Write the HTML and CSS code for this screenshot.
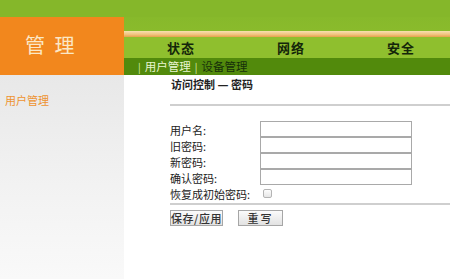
FILE: index.html
```html
<!DOCTYPE html>
<html lang="zh-CN">
<head>
  <meta charset="UTF-8" />
  <title>管理</title>
  <link rel="stylesheet" href="styles.css">
</head>
<body>
  <!-- Header -->
  <div class="top-band"></div>
  <div class="header">
    <div class="brand">管 理</div>
    <div class="header-right">
      <div class="header-green"></div>
      <div class="stripe"></div>
      <div class="nav">
        <div class="nav-item">状态</div>
        <div class="nav-item">网络</div>
        <div class="nav-item">安全</div>
      </div>
      <div class="subnav">
        <span class="sep">|</span>
        <span class="sub active">用户管理</span>
        <span class="sep">|</span>
        <span class="sub">设备管理</span>
      </div>
    </div>
  </div>

  <!-- Main -->
  <div class="main">
    <div class="sidebar">
      <div class="side-link">用户管理</div>
    </div>
    <div class="content">
      <div class="title">访问控制 <b class="dash">—</b> 密码</div>
      <div class="rule"></div>
      <div class="form">
        <label>用户名:</label><input type="text">
        <label>旧密码:</label><input type="password">
        <label>新密码:</label><input type="password">
        <label>确认密码:</label><input type="password">
        <label>恢复成初始密码:</label><div class="check-cell"><input type="checkbox" class="check"></div>
      </div>
      <div class="rule rule-low"></div>
      <div class="buttons">
        <button class="btn">保存/应用</button>
        <button class="btn btn-narrow">重写</button>
      </div>
    </div>
  </div>
</body>
</html>
```

FILE: styles.css
```css
* { box-sizing: border-box; margin: 0; padding: 0; }
html, body {
  height: 100%;
  overflow: hidden;
  font-family: "Noto Sans CJK SC", "Liberation Sans", sans-serif;
  font-size: 11px;
  color: #222;
}
body {
  display: flex;
  flex-direction: column;
  background: #fff;
}

/* Header */
.top-band {
  height: 17px;
  background: #85b72a;
}
.header {
  display: flex;
  height: 58px;
}
.brand {
  width: 124px;
  flex-shrink: 0;
  background: #f2871d;
  color: #fbe7c6;
  font-size: 20px;
  word-spacing: 5px;
  display: flex;
  align-items: center;
  padding: 0 0 3px 25px;
}
.header-right {
  flex: 1;
  display: flex;
  flex-direction: column;
}
.header-green {
  height: 14px;
  background: linear-gradient(#87b92b, #8abb2c);
}
.stripe {
  height: 6px;
  background: linear-gradient(#f7e0b0, #f0c27c 60%, #e5a04c);
}
.nav {
  height: 21px;
  display: flex;
  background: #8fbf2e;
}
.nav-item {
  width: 110px;
  text-align: center;
  font-size: 13px;
  font-weight: bold;
  line-height: 21px;
  color: #14260a;
  letter-spacing: 1px;
  padding-left: 4px;
}
.subnav {
  height: 17px;
  background: #528a0c;
  display: flex;
  align-items: center;
  gap: 4px;
  padding-left: 14px;
  font-size: 11.5px;
  line-height: 17px;
}
.subnav .sep { color: #dcefb0; font-size: 10px; }
.subnav .sub { color: #16300a; }
.subnav .sub.active { color: #e9f5cf; }

/* Main */
.main {
  flex: 1;
  display: flex;
  min-height: 0;
}
.sidebar {
  width: 124px;
  flex-shrink: 0;
  background: linear-gradient(#e8e8e8, #f3f3f3 60%, #f9f9f9);
  padding: 17px 0 0 5px;
}
.side-link {
  color: #ee9330;
  font-size: 11px;
}
.content {
  flex: 1;
  padding: 2px 0 0 46px;
}
.title {
  font-weight: bold;
  font-size: 11px;
  line-height: 14px;
  height: 14px;
  padding-left: 1px;
}
.title .dash { font-family: "DejaVu Sans", sans-serif; font-size: 11px; }
.rule {
  height: 2px;
  background: #cfcfcf;
  margin-top: 13px;
}
.rule-low { margin-top: 2px; }

.form {
  display: grid;
  grid-template-columns: 90px 152px;
  grid-auto-rows: 16px;
  margin-top: 15px;
  align-items: center;
}
.form label {
  line-height: 16px;
  height: 16px;
  padding-top: 1px;
}
.form input[type="text"],
.form input[type="password"] {
  height: 16px;
  border: 1px solid #a9a9a9;
  background: #fff;
}
.check-cell {
  display: flex;
  align-items: center;
  height: 16px;
  padding-top: 1px;
}
.check {
  appearance: none;
  width: 9px;
  height: 9px;
  margin-left: 3px;
  border: 1px solid #b4b4b4;
  border-radius: 2px;
  background: linear-gradient(#fdfdfd, #e6e6e6);
}

.buttons {
  display: flex;
  gap: 15px;
  margin-top: 5px;
}
.btn {
  height: 16px;
  width: 53px;
  padding: 0;
  white-space: nowrap;
  font-family: inherit;
  font-size: 11px;
  font-weight: 500;
  line-height: 14px;
  color: #333;
  border: 1px solid #a6a6a6;
  background: linear-gradient(#fbfbfb, #e2e2e2);
  letter-spacing: 0.5px;
}
.btn-narrow { width: 45px; letter-spacing: 2px; }
```
